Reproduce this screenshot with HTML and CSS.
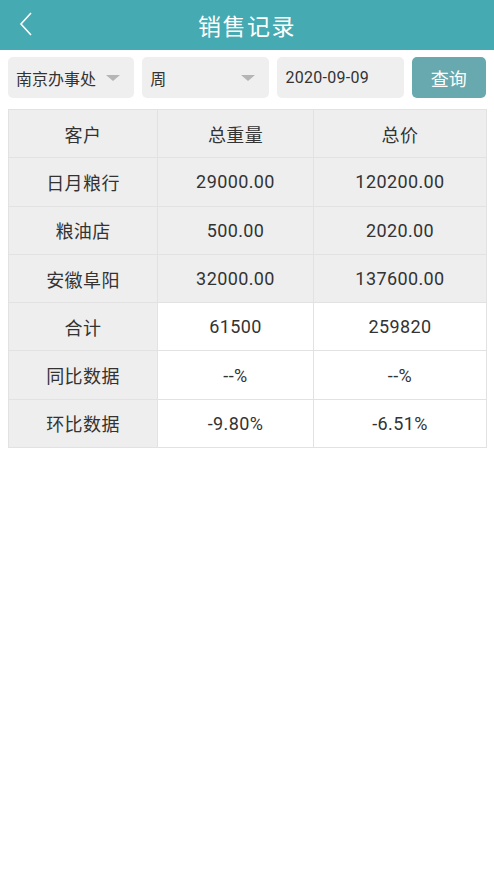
FILE: index.html
```
<!DOCTYPE html>
<html lang="zh">
<head>
<meta charset="utf-8">
<link rel="stylesheet" href="styles.css">
</head>
<body>
<header class="topbar">
  <svg class="back" width="14" height="24" viewBox="0 0 14 24"><path d="M12 1 L2 12 L12 23" fill="none" stroke="#fff" stroke-width="1.6"/></svg>
  <h1 class="title">销售记录</h1>
</header>
<div class="filters">
  <div class="field sel1"><span>南京办事处</span><i class="tri"></i></div>
  <div class="field sel2"><span>周</span><i class="tri"></i></div>
  <div class="field date"><span>2020-09-09</span></div>
  <button class="query">查询</button>
</div>
<div class="table">
  <div class="c g">客户</div><div class="c g">总重量</div><div class="c g">总价</div>
  <div class="c g">日月粮行</div><div class="c g">29000.00</div><div class="c g">120200.00</div>
  <div class="c g">粮油店</div><div class="c g">500.00</div><div class="c g">2020.00</div>
  <div class="c g">安徽阜阳</div><div class="c g">32000.00</div><div class="c g">137600.00</div>
  <div class="c g">合计</div><div class="c">61500</div><div class="c">259820</div>
  <div class="c g">同比数据</div><div class="c">--%</div><div class="c">--%</div>
  <div class="c g">环比数据</div><div class="c">-9.80%</div><div class="c">-6.51%</div>
</div>
</body>
</html>
```
FILE: styles.css
```
* { box-sizing: border-box; }
body {
  margin: 0;
  background: #fff;
  font-family: Roboto, "Noto Sans CJK SC", sans-serif;
  color: #333;
}
.topbar {
  height: 50px;
  background: #45aab1;
  display: flex;
  align-items: center;
  justify-content: center;
  position: relative;
}
.back { position: absolute; left: 19px; top: 12px; }
.title {
  margin: 0;
  font-size: 23px;
  font-weight: 400;
  color: #fff;
  letter-spacing: 1.5px;
}
.filters {
  display: flex;
  gap: 8px;
  padding: 7px 8px 0 8px;
  height: 48px;
}
.field {
  height: 41px;
  background: #efefef;
  border-radius: 5px;
  display: flex;
  align-items: center;
  justify-content: space-between;
  padding: 0 14px 0 8px;
  font-size: 16px;
  color: #333;
}
.sel1 { width: 127px; }
.sel2 { width: 128px; padding-right: 14px; }
.date { width: 127px; letter-spacing: 0.3px; }
.tri {
  width: 0; height: 0;
  border-left: 7px solid transparent;
  border-right: 7px solid transparent;
  border-top: 6px solid #b5b5b5;
}
.query {
  width: 75px;
  height: 41px;
  border: none;
  border-radius: 5px;
  background: #67a9ae;
  color: #fff;
  font-family: inherit;
  font-size: 18px;
  padding: 0;
}
.table {
  margin: 11px 8px 0 8px;
  display: grid;
  grid-template-columns: 149px 156px 173px;
  border: 1px solid #e2e2e2;
  border-right: none;
  border-bottom: none;
  width: 479px;
}
.c {
  height: 48.3px;
  display: flex;
  align-items: center;
  justify-content: center;
  font-size: 18px;
  letter-spacing: 0.4px;
  border-right: 1px solid #e2e2e2;
  border-bottom: 1px solid #e2e2e2;
  background: #fff;
}
.g { background: #eeeeee; }
```
